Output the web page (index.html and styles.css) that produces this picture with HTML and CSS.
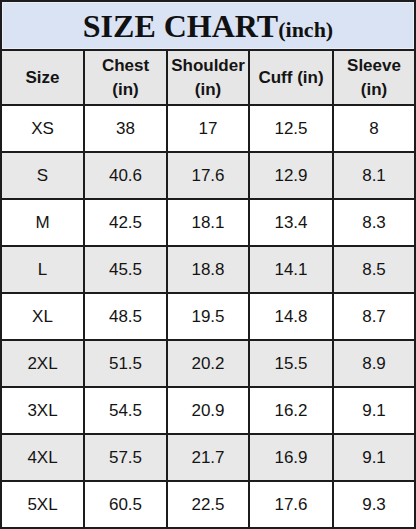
FILE: index.html
```html
<!DOCTYPE html>
<html>
<head>
<meta charset="utf-8">
<link rel="stylesheet" href="styles.css">
</head>
<body>
<div class="chart">
  <div class="title"><span class="big">SIZE CHART</span><span class="small">(inch)</span></div>
  <div class="cell head">Size</div>
  <div class="cell head">Chest<br>(in)</div>
  <div class="cell head">Shoulder<br>(in)</div>
  <div class="cell head">Cuff (in)</div>
  <div class="cell head">Sleeve<br>(in)</div>

  <div class="cell">XS</div><div class="cell">38</div><div class="cell">17</div><div class="cell">12.5</div><div class="cell">8</div>
  <div class="cell alt">S</div><div class="cell alt">40.6</div><div class="cell alt">17.6</div><div class="cell alt">12.9</div><div class="cell alt">8.1</div>
  <div class="cell">M</div><div class="cell">42.5</div><div class="cell">18.1</div><div class="cell">13.4</div><div class="cell">8.3</div>
  <div class="cell alt">L</div><div class="cell alt">45.5</div><div class="cell alt">18.8</div><div class="cell alt">14.1</div><div class="cell alt">8.5</div>
  <div class="cell">XL</div><div class="cell">48.5</div><div class="cell">19.5</div><div class="cell">14.8</div><div class="cell">8.7</div>
  <div class="cell alt">2XL</div><div class="cell alt">51.5</div><div class="cell alt">20.2</div><div class="cell alt">15.5</div><div class="cell alt">8.9</div>
  <div class="cell">3XL</div><div class="cell">54.5</div><div class="cell">20.9</div><div class="cell">16.2</div><div class="cell">9.1</div>
  <div class="cell alt">4XL</div><div class="cell alt">57.5</div><div class="cell alt">21.7</div><div class="cell alt">16.9</div><div class="cell alt">9.1</div>
  <div class="cell">5XL</div><div class="cell">60.5</div><div class="cell">22.5</div><div class="cell">17.6</div><div class="cell">9.3</div>
</div>
</body>
</html>
```

FILE: styles.css
```css
html, body {
  margin: 0;
  padding: 0;
  background: #ffffff;
}

.chart {
  width: 416px;
  height: 529px;
  box-sizing: border-box;
  display: grid;
  grid-template-columns: 81px 81px 80px 82px 80px;
  grid-template-rows: 47px 53px repeat(9, 45px);
  gap: 2px;
  padding: 2px;
  background: #1c1c1c;
  font-family: "Liberation Sans", Arial, sans-serif;
  color: #141414;
}

.title {
  grid-column: 1 / 6;
  background: #dae3f3;
  box-shadow: inset 0 0 0 1px #e9eef8;
  display: flex;
  align-items: baseline;
  justify-content: center;
  padding-top: 8px;
  box-sizing: border-box;
  font-family: "Liberation Serif", "Times New Roman", serif;
  font-weight: bold;
  color: #111111;
  line-height: 1;
}

.big {
  font-size: 32px;
}

.small {
  font-size: 22px;
}

.cell {
  background: #ffffff;
  display: flex;
  align-items: center;
  justify-content: center;
  text-align: center;
  font-size: 17px;
}

.alt {
  background: #e8e8e8;
}

.head {
  background: #e6e6e6;
  font-weight: bold;
  line-height: 24px;
}
```
